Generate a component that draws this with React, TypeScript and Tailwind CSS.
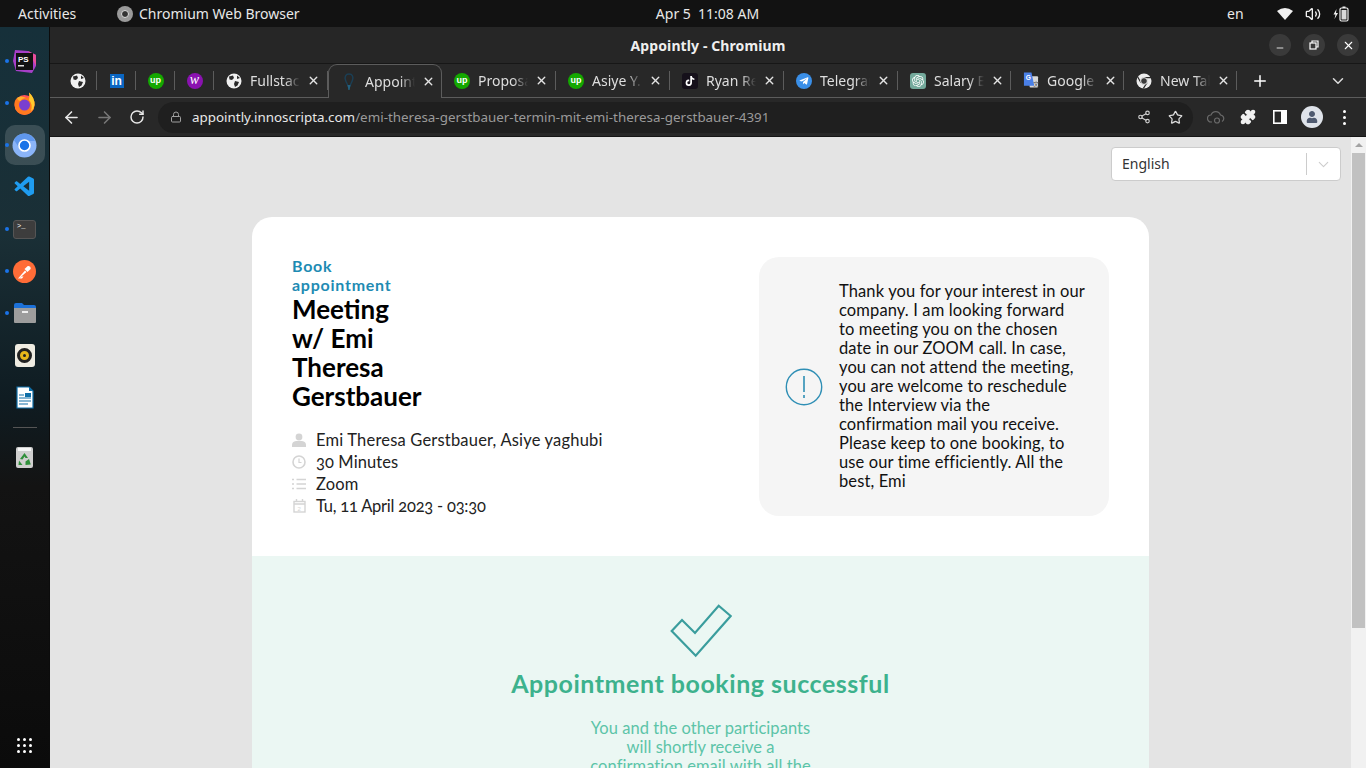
import React from "react";
import { ArrowLeft, ArrowRight, RotateCw, Lock, Share2, Star, Puzzle, X, Plus, ChevronDown, Minus, Volume2 } from "lucide-react";
import { FaTelegramPlane, FaTiktok, FaUser } from "react-icons/fa";
import { SiOpenai } from "react-icons/si";
import { VscVscode } from "react-icons/vsc";

const raleway = "font-['Lato',sans-serif]";

function Globe() {
  return (
    <svg width="16" height="16" viewBox="0 0 16 16">
      <circle cx="8" cy="8" r="7.5" fill="#f1f1f1" />
      <path d="M3 3.5 L7 2.5 L8 5 L6 7 L3.5 6.5 Z M9 8 L13 9 L11.5 12.5 L9 14 L8 11 Z M11 2.5 L14 5 L11 6 Z" fill="#2a2a2a" />
    </svg>
  );
}

function Upwork() {
  return (
    <div className="w-4 h-4 rounded-full bg-[#14a800] flex items-center justify-center text-white text-[9px] font-bold leading-none font-['Liberation_Sans',sans-serif]">
      up
    </div>
  );
}

function Linkedin() {
  return (
    <div className="w-[14px] h-[14px] bg-[#0a66c2] flex items-center justify-center text-white text-[12px] font-bold leading-none font-['Liberation_Sans',sans-serif]">
      in
    </div>
  );
}

function Wonder() {
  return (
    <div className="w-4 h-4 rounded-full bg-[#8a12b0] flex items-center justify-center text-white text-[14px] italic leading-none pb-[2px] font-['Liberation_Serif',serif]">
      w
    </div>
  );
}

function Balloon() {
  return (
    <svg width="12" height="18" viewBox="0 0 12 18">
      <path d="M6 1 C2.5 1 1.5 4 2.5 7 C3.2 9.5 4.5 11 5 13 L7 13 C7.5 11 8.8 9.5 9.5 7 C10.5 4 9.5 1 6 1 Z" fill="none" stroke="#1b3f55" strokeWidth="1.4" />
      <path d="M4.5 12 L7.5 12 L6.6 17 L5.4 17 Z" fill="#24617f" />
    </svg>
  );
}

function Tiktok() {
  return (
    <div className="w-4 h-4 rounded-[3px] bg-[#15101a] flex items-center justify-center text-white">
      <FaTiktok size={10} />
    </div>
  );
}

function Telegram() {
  return (
    <div className="w-4 h-4 rounded-full bg-[#3a8fe8] flex items-center justify-center text-white">
      <FaTelegramPlane size={10} />
    </div>
  );
}

function Gpt() {
  return (
    <div className="w-4 h-4 rounded-[3px] bg-[#74aa9c] flex items-center justify-center text-white">
      <SiOpenai size={12} />
    </div>
  );
}

function Translate() {
  return (
    <svg width="17" height="17" viewBox="0 0 17 17">
      <rect x="7" y="4" width="9" height="12" rx="1" fill="#d8d8d8" />
      <path d="M1 0 H9 L12 14 H1 Z" fill="#4a80e8" />
      <text x="3" y="8" fontSize="7" fontWeight="700" fill="#fff" fontFamily="Liberation Sans">G</text>
      <text x="11" y="14" fontSize="6" fill="#555" fontFamily="Noto Sans CJK SC">文</text>
    </svg>
  );
}

function ChromeMono() {
  return (
    <svg width="16" height="16" viewBox="0 0 16 16">
      <circle cx="8" cy="8" r="7.5" fill="#ececec" />
      <path d="M8 4.6 H15 M5 9.7 L1.6 3.8 M11 9.7 L7.4 15.4" stroke="#282828" strokeWidth="1.2" />
      <circle cx="8" cy="8" r="3.4" fill="#3a3a3a" stroke="#ececec" strokeWidth="1" />
    </svg>
  );
}

const pinned = [<Globe />, <Linkedin />, <Upwork />, <Wonder />];

const tabs = [
  { icon: <Globe />, title: "Fullstack", w: "w-[114px]" },
  { icon: <Balloon />, title: "Appointly", w: "w-[114px]", active: true },
  { icon: <Upwork />, title: "Proposals", w: "w-[114px]" },
  { icon: <Upwork />, title: "Asiye Y.", w: "w-[114px]" },
  { icon: <Tiktok />, title: "Ryan Rey", w: "w-[114px]" },
  { icon: <Telegram />, title: "Telegram", w: "w-[114px]" },
  { icon: <Gpt />, title: "Salary Est", w: "w-[113px]" },
  { icon: <Translate />, title: "Google Tr", w: "w-[113px]" },
  { icon: <ChromeMono />, title: "New Tab", w: "w-[113px]" },
];

function Tab({ icon, title, w, active }: { icon: React.ReactNode; title: string; w: string; active?: boolean }) {
  return (
    <div
      className={`${w} h-[33px] flex items-center pl-[12px] relative ${
        active ? "bg-[#282828] border border-b-0 border-[#5c5c5c] rounded-t-[9px] h-[34px] -mb-px z-10" : ""
      }`}
    >
      <div className="w-[16px] flex justify-center shrink-0">{icon}</div>
      <span className="ml-[8px] w-[50px] overflow-hidden whitespace-nowrap text-[14px] text-[#dedede] [mask-image:linear-gradient(to_right,black_70%,transparent)]">
        {title}
      </span>
      <X size={13} strokeWidth={2.6} className="ml-[7px] text-[#e4e4e4] shrink-0" />
      {!active && <div className="absolute right-0 top-[7px] w-px h-[19px] bg-[#5c5c5c]" />}
    </div>
  );
}

function Dock() {
  const item = "h-[42px] w-full flex items-center justify-center relative";
  const dot = <div className="absolute left-[5px] top-[19px] w-[4px] h-[4px] rounded-full bg-[#1a73e8]" />;
  return (
    <div className="w-[50px] shrink-0 flex flex-col items-center pt-[13px] pb-[15px] border-r border-[#0c0c0c] bg-[linear-gradient(to_bottom,#16303a_0%,#1a2f36_28%,#0f1c22_50%,#131313_62%,#0b0b0b_100%)]">
      <div className={item}>
        {dot}
        <svg width="25" height="25" viewBox="0 0 25 25">
          <path d="M3 1 L16 2 L24 6 L24 17 L20 24 L4 22 L1 12 Z" fill="#a63fc8" />
          <path d="M16 2 L24 6 L24 17 Z" fill="#e84d9b" />
          <rect x="4" y="4" width="17" height="17" fill="#111" />
          <text x="6" y="12.5" fontSize="8" fontWeight="700" fill="#fff" fontFamily="Liberation Sans">PS</text>
          <rect x="6" y="16" width="6" height="1.5" fill="#ddd" />
        </svg>
      </div>
      <div className={item}>
        {dot}
        <svg width="23" height="23" viewBox="0 0 23 23">
          <circle cx="11.5" cy="13" r="10" fill="#ff4f5e" />
          <path d="M1.5 13 A10 10 0 0 0 11.5 23 A10 10 0 0 0 21.5 13 Q22 6 16 0.5 Q17 5 14 6 Q8 3 4 6 Q1 9 1.5 13 Z" fill="#ff7a1f" />
          <path d="M16 0.5 Q22 6 21.5 13 Q21 17 18 19 Q20 12 16 8 Q17 4 16 0.5 Z" fill="#ffcb2d" />
          <circle cx="11.5" cy="13" r="5.5" fill="#7a3fd0" />
          <path d="M4 6 Q8 3 13 6 Q9 6 7.5 9 Q5 9 4 6 Z" fill="#ffb02e" />
        </svg>
      </div>
      <div className={item}>
        <div className="absolute left-[5px] top-[1px] w-[40px] h-[40px] rounded-[10px] bg-[#ffffff26]" />
        {dot}
        <svg width="25" height="25" viewBox="0 0 25 25" className="relative">
          <circle cx="12.5" cy="12.5" r="12" fill="#8ab4f8" />
          <path d="M12.5 .5 A12 12 0 0 0 2 7 L8 16 L12.5 8 L23 8 A12 12 0 0 0 12.5 .5 Z" fill="#5f97ec" />
          <circle cx="12.5" cy="12.5" r="5.5" fill="#1a73e8" stroke="#fff" strokeWidth="1.6" />
        </svg>
      </div>
      <div className={item}>
        <VscVscode size={24} className="text-[#1f9cf0]" />
      </div>
      <div className={item}>
        {dot}
        <div className="w-[23px] h-[19px] rounded-[3px] bg-[#3d3d3d] border border-[#555] flex items-start pl-[3px] pt-px text-white text-[7px] leading-[9px] font-['Liberation_Mono',monospace]">
          &gt;_
        </div>
      </div>
      <div className={item}>
        {dot}
        <svg width="23" height="23" viewBox="0 0 23 23">
          <circle cx="11.5" cy="11.5" r="11.5" fill="#ff6c37" />
          <path d="M5 18.5 L12 10.5 L13.5 12 L6 18.5 Z" fill="#fff" />
          <path d="M11.5 9 L14.8 6 A2.4 2.4 0 0 1 17.6 9 L14.5 12 Z" fill="#fff" />
          <path d="M6 18.5 L9 18.5 L10.5 16.5 L8.5 16.5 Z" fill="#fff" />
        </svg>
      </div>
      <div className={item}>
        {dot}
        <svg width="24" height="22" viewBox="0 0 24 22">
          <path d="M1 3 Q1 1 3 1 H9 L11 3 H21 Q23 3 23 5 V8 H1 Z" fill="#1c71d8" />
          <path d="M1 6 H23 V20 Q23 21 22 21 H2 Q1 21 1 20 Z" fill="#9d9d9d" />
          <rect x="9" y="9" width="6" height="2" fill="#eee" />
        </svg>
      </div>
      <div className={item}>
        <div className="w-[20px] h-[23px] rounded-[3px] bg-[#efece2] flex items-center justify-center">
          <div className="w-[15px] h-[15px] rounded-full bg-[#e8b71a] border-[3px] border-[#222] flex items-center justify-center">
            <div className="w-[3px] h-[3px] rounded-full bg-[#222]" />
          </div>
        </div>
      </div>
      <div className={item}>
        <svg width="18" height="23" viewBox="0 0 18 23">
          <path d="M1 1 H13 L17 5 V22 H1 Z" fill="#fff" stroke="#0f6fa8" strokeWidth="1.2" />
          <path d="M13 1 L17 5 H13 Z" fill="#0f6fa8" />
          <rect x="9" y="7" width="6" height="4" fill="#0f6fa8" />
          <path d="M3 9 H8 M3 12 H15 M3 15 H15 M3 18 H12" stroke="#0f6fa8" strokeWidth="1.2" />
        </svg>
      </div>
      <div className="w-[24px] h-px bg-[#555] mt-[9px] mb-[8px]" />
      <div className={item}>
        <svg width="19" height="23" viewBox="0 0 19 23">
          <rect x="1" y="1" width="17" height="21" rx="2" fill="#cfcfcf" />
          <rect x="3" y="2" width="13" height="3" fill="#f5f5f5" />
          <path d="M9.5 7 L13 12 L10.5 12 L9.5 10.5 L7.5 13.5 L5 13 Z M4 14.5 L7.5 19 L3.5 19 Z M14 13 L15.8 18.5 L10.5 19 L10.5 15.5 Z" fill="#2f8f3a" />
        </svg>
      </div>
      <div className="mt-auto grid grid-cols-3 gap-[3px]">
        {[0, 1, 2, 3, 4, 5, 6, 7, 8].map((i) => (
          <div key={i} className="w-[3px] h-[3px] rounded-full bg-white" />
        ))}
      </div>
    </div>
  );
}

const details = [
  { k: "user", text: "Emi Theresa Gerstbauer, Asiye yaghubi", track: "tracking-[0.19px]" },
  { k: "clock", text: "30 Minutes", track: "tracking-[0.1px]" },
  { k: "list", text: "Zoom", track: "tracking-[0.19px]" },
  { k: "cal", text: "Tu, 11 April 2023 - 03:30", track: "tracking-[-0.22px]" },
];

const noteLines = [
  "Thank you for your interest in our",
  "company. I am looking forward",
  "to meeting you on the chosen",
  "date in our ZOOM call. In case,",
  "you can not attend the meeting,",
  "you are welcome to reschedule",
  "the Interview via the",
  "confirmation mail you receive.",
  "Please keep to one booking, to",
  "use our time efficiently. All the",
  "best, Emi",
];

export default function App() {
  return (
    <div className="w-[1366px] h-[768px] overflow-hidden flex flex-col font-['Noto_Sans',sans-serif] bg-[#e4e4e4]">
      {/* gnome top bar */}
      <div className="h-[27px] shrink-0 bg-[#121212] text-[#e8e8e8] text-[14px] flex items-center">
        <span className="ml-[18px] w-[99px]">Activities</span>
        <div className="w-[16px] h-[16px] rounded-full bg-[#9a9a9a] flex items-center justify-center">
          <div className="w-[8px] h-[8px] rounded-full bg-[#333] border border-[#ddd]" />
        </div>
        <span className="ml-[6px] w-[516px]">Chromium Web Browser</span>
        <span className="w-[105px] whitespace-pre text-center">Apr 5  11:08 AM</span>
        <span className="ml-[467px] w-[40px]">en</span>
        <svg width="16" height="12" viewBox="0 0 16 12" className="ml-[10px]">
          <path d="M0 3 Q8 -3 16 3 L8 12 Z" fill="#f0f0f0" />
        </svg>
        <Volume2 size={16} className="ml-[12px] text-[#f0f0f0]" />
        <svg width="16" height="16" viewBox="0 0 16 16" className="ml-[12px]">
          <path d="M3.5 3 L0.5 8.5 H2.5 L1.5 13 L5 7 H3 Z" fill="#f0f0f0" />
          <rect x="7" y="2" width="8" height="13" rx="1.5" fill="none" stroke="#f0f0f0" strokeWidth="1.2" />
          <rect x="9.5" y="0.5" width="3" height="1.5" fill="#f0f0f0" />
          <rect x="8.5" y="4" width="5" height="9.5" fill="#f0f0f0" opacity="0.9" />
        </svg>
      </div>

      <div className="flex-1 flex min-h-0">
        <Dock />
        <div className="flex-1 flex flex-col min-w-0">
          {/* title bar */}
          <div className="h-[37px] shrink-0 bg-[#262626] border-b border-[#171717] flex items-center relative">
            <span className="flex-1 text-center text-[14px] font-bold tracking-[0.1px] text-[#efefef]">Appointly - Chromium</span>
            <div className="absolute right-[7px] top-[7px] flex gap-[12px]">
              <div className="w-[22px] h-[22px] rounded-full bg-[#3a3a3a] flex items-center justify-center text-white"><Minus size={10} strokeWidth={2} className="mt-[5px]" /></div>
              <div className="w-[22px] h-[22px] rounded-full bg-[#3a3a3a] flex items-center justify-center">
                <svg width="10" height="10" viewBox="0 0 10 10" fill="none" stroke="#fff" strokeWidth="1.2"><rect x="1" y="3" width="6" height="6" /><path d="M3 3 V1 H9 V7 H7" /></svg>
              </div>
              <div className="w-[22px] h-[22px] rounded-full bg-[#3a3a3a] flex items-center justify-center text-white"><X size={13} strokeWidth={2} /></div>
            </div>
          </div>

          {/* tabs */}
          <div className="h-[33px] shrink-0 bg-[#282828] border-b border-[#5c5c5c] box-content flex items-start pl-[8px] text-white">
            {pinned.map((p, i) => (
              <div key={i} className="w-[39px] h-[33px] flex items-center justify-center relative">
                {p}
                <div className="absolute right-0 top-[7px] w-px h-[19px] bg-[#5c5c5c]" />
              </div>
            ))}
            {tabs.map((t) => (
              <Tab key={t.title} {...t} />
            ))}
            <Plus size={18} strokeWidth={2} className="ml-[14px] mt-[8px]" />
            <ChevronDown size={18} strokeWidth={2} className="ml-[60px] mt-[8px] text-[#ddd]" />
          </div>

          {/* toolbar */}
          <div className="h-[39px] shrink-0 bg-[#282828] border-b border-[#151515] flex items-center text-[#e8e8e8]">
            <ArrowLeft size={19} strokeWidth={2} className="ml-[12px]" />
            <ArrowRight size={19} strokeWidth={2} className="ml-[14px] text-[#777]" />
            <RotateCw size={16} strokeWidth={2.2} className="ml-[15px]" />
            <div className="ml-[13px] w-[1035px] h-[31px] rounded-full bg-[#1f1f1f] flex items-center pl-[12px] pr-[10px]">
              <Lock size={12} className="text-[#a0a0a0]" />
              <span className="ml-[10px] text-[13.4px] text-[#e8e8e8] whitespace-nowrap">
                appointly.innoscripta.com<span className="text-[#9a9a9a]">/emi-theresa-gerstbauer-termin-mit-emi-theresa-gerstbauer-4391</span>
              </span>
              <Share2 size={14} className="ml-auto text-[#cfcfcf]" />
              <Star size={15} className="ml-[17px] text-[#dcdcdc]" />
            </div>
            <svg width="18" height="14" viewBox="0 0 18 14" fill="none" stroke="#6a6a6a" strokeWidth="1.2" className="ml-[14px]">
              <path d="M5 12 H4 A3.5 3.5 0 0 1 4 5 A5 5 0 0 1 13.5 5 A3.5 3.5 0 0 1 15 11.5" />
              <circle cx="10" cy="10.5" r="2.5" />
            </svg>
            <Puzzle size={16} fill="#f0f0f0" className="ml-[15px] text-[#f0f0f0]" />
            <svg width="14" height="14" viewBox="0 0 14 14" className="ml-[17px]">
              <rect x="0.8" y="0.8" width="12.4" height="12.4" fill="none" stroke="#fff" strokeWidth="1.6" />
              <rect x="8" y="1" width="5" height="12" fill="#fff" />
            </svg>
            <div className="ml-[14px] w-[22px] h-[22px] rounded-full bg-[#dfe3ea] flex items-center justify-center overflow-hidden text-[#4f5a70]">
              <FaUser size={12} />
            </div>
            <div className="ml-[20px] flex flex-col gap-[3px]">
              <div className="w-[3px] h-[3px] rounded-full bg-white" />
              <div className="w-[3px] h-[3px] rounded-full bg-white" />
              <div className="w-[3px] h-[3px] rounded-full bg-white" />
            </div>
          </div>

          {/* page */}
          <div className="flex-1 flex min-h-0">
            <div className={`flex-1 min-w-0 bg-[#e4e4e4] pt-[10px] overflow-hidden ${raleway}`}>
              <div className="flex justify-end pr-[10px]">
                <div className="w-[230px] h-[34px] bg-white border border-[#cccccc] rounded-[4px] flex items-center pl-[10px] pb-[2px] text-[14px] text-[#333] font-['Noto_Sans',sans-serif]">
                  English
                  <div className="ml-auto mt-[2px] w-px h-[22px] bg-[#cccccc]" />
                  <ChevronDown size={17} strokeWidth={1.5} className="mx-[8px] mt-[2px] text-[#cccccc]" />
                </div>
              </div>

              <div className="mt-[36px] mx-auto w-[897px] rounded-t-[20px] overflow-hidden bg-white">
                <div className="p-[40px] flex justify-between h-[339px]">
                  <div>
                    <div className="-mt-px mb-px text-[16px] leading-[19px] font-bold tracking-[0.75px] text-[#1e8bb3]">
                      Book<br />appointment
                    </div>
                    <div className="text-[26px] leading-[29px] font-bold text-black">
                      Meeting<br />w/ Emi<br />Theresa<br />Gerstbauer
                    </div>
                    <div className="mt-[18px] text-[16.5px] leading-[22px] text-[#222] oldstyle-nums">
                      {details.map((d) => (
                        <div key={d.k} className="flex items-center h-[22px]">
                          <div className="w-[14px] mr-[10px] flex justify-center">
                            <RowIcon kind={d.k} />
                          </div>
                          <span className={d.track}>{d.text}</span>
                        </div>
                      ))}
                    </div>
                  </div>
                  <div className="w-[350px] h-[259px] bg-[#f5f5f5] rounded-[20px] flex items-center pl-[26px]">
                    <svg width="38" height="38" viewBox="0 0 38 38" className="shrink-0">
                      <circle cx="19" cy="19" r="17.7" fill="none" stroke="#2f8fb5" strokeWidth="1.4" />
                      <path d="M19 8 V24 M19 27 V30" stroke="#2f8fb5" strokeWidth="1.6" />
                    </svg>
                    <p className="ml-[16px] whitespace-nowrap text-[16.5px] leading-[19px] tracking-[0.12px] text-[#111]">
                      {noteLines.map((line) => (
                        <span key={line} className="block">{line}</span>
                      ))}
                    </p>
                  </div>
                </div>

                <div className="h-[300px] bg-[#ebf7f3] flex flex-col items-center pt-[48px]">
                  <svg width="62" height="54" viewBox="0 0 62 54">
                    <path d="M1.7 27 L12 16 L25 29 L48.7 1.7 L60.7 12 L25.7 51.7 Z" fill="none" stroke="#3a9d9d" strokeWidth="2.2" />
                  </svg>
                  <div className="mt-[10px] text-[25px] leading-[30px] font-bold tracking-[0.53px] text-[#3db28d]">Appointment booking successful</div>
                  <p className="mt-[21px] w-[240px] text-center text-[16.5px] leading-[19px] tracking-[0.05px] text-[#5cc4a8]">
                    You and the other participants will shortly receive a confirmation email with all the
                  </p>
                </div>
              </div>
            </div>

            {/* scrollbar */}
            <div className="w-[15px] shrink-0 bg-[#f1f1f1] flex flex-col items-center">
              <div className="mt-[6px] w-0 h-0 border-x-[4px] border-x-transparent border-b-[4px] border-b-[#a3a3a3]" />
              <div className="mt-[6px] w-[13px] h-[475px] bg-[#c1c1c1]" />
            </div>
          </div>
        </div>
      </div>
    </div>
  );
}

function RowIcon({ kind }: { kind: string }) {
  const c = "#d4d4d4";
  if (kind === "user") {
    return (
      <svg width="14" height="14" viewBox="0 0 14 14" fill={c}>
        <circle cx="7" cy="4" r="3.4" />
        <path d="M0 14 V12 Q0 8.5 4 8 H10 Q14 8.5 14 12 V14 Z" />
      </svg>
    );
  }
  if (kind === "clock") {
    return (
      <svg width="14" height="14" viewBox="0 0 14 14" fill="none" stroke={c} strokeWidth="1.6">
        <circle cx="7" cy="7" r="6" />
        <path d="M7 3.5 V7.5 H9.5" strokeWidth="1.2" />
      </svg>
    );
  }
  if (kind === "list") {
    return (
      <svg width="14" height="12" viewBox="0 0 14 12" stroke={c} strokeWidth="1.5">
        <path d="M0 1.5 H2 M4.5 1.5 H14 M0 6 H2 M4.5 6 H14 M0 10.5 H2 M4.5 10.5 H14" />
      </svg>
    );
  }
  return (
    <svg width="13" height="14" viewBox="0 0 13 14" fill="none" stroke={c} strokeWidth="1.4">
      <rect x="1" y="2.5" width="11" height="10.5" />
      <path d="M3.5 0 V3 M9.5 0 V3 M1 5 H12" />
      <text x="4.5" y="11.5" fontSize="6" fill={c} stroke="none" fontFamily="Liberation Sans">2</text>
    </svg>
  );
}
